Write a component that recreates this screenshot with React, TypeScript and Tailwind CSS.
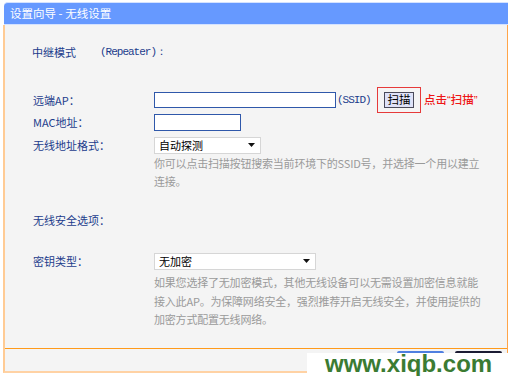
const cjk = "font-['Noto_Sans_CJK_SC',sans-serif]";
const mono = "font-['Liberation_Mono',monospace] text-[11px] tracking-[-1px]";
const label = 'w-[121px] shrink-0 text-[11px] leading-[18px] text-[#1c3c8c]';
const hint = 'ml-[121px] text-[11px] tracking-[-0.2px] text-[#9a9a9a]';
const quote = "font-['Liberation_Sans',sans-serif]";

function Select({ value, width }: { value: string; width: string }): React.JSX.Element {
  return (
    <div
      className={`${width} flex h-[17px] items-center justify-between border border-[#d6d6d6] bg-white pl-[4px] pr-[5px] text-[11px] text-black`}
    >
      <span className="leading-[15px]">{value}</span>
      <svg width="7" height="4" viewBox="0 0 7 4">
        <path d="M0 0h7L3.5 4z" fill="#111" />
      </svg>
    </div>
  );
}

export default function App(): React.JSX.Element {
  return (
    <div className={`relative h-[376px] w-[510px] overflow-hidden bg-white ${cjk}`}>
      <div className="pt-[2px]">
        {/* title bar */}
        <div className="ml-[4px] flex h-[23px] w-[504px] items-center rounded-tl-[4px] border-y border-[#d4e2ff] bg-[#6699ff] pl-[6px] text-[11.5px] text-white">
          设置向导 - 无线设置
        </div>

        <div className="ml-[3px] w-[505px] border-b-2 border-l-2 border-r border-b-[#ffd2a4] border-l-[#ffcb94] border-r-[#ffa448] bg-[#f4f4f4]">
          <div className="flex h-[324px] flex-col border-b border-[#ff9a1a] pl-[28px]">
            <div className="ml-[-1px] mt-[18px] flex h-[18px] items-center text-[11px] text-[#1c3c8c]">
              <span className="w-[68px]">中继模式</span>
              <span className={`${mono} text-[#1c3c8c]`}>(Repeater)：</span>
            </div>

            <div className="mt-[28px] flex h-[22px] items-center">
              <span className={label}>远端AP：</span>
              <div className="h-[16px] w-[182px] border border-[#2f58aa] bg-white" />
              <span className={`${mono} ml-[1px] w-[40px] text-[#1c3c8c]`}>(SSID)</span>
              <div className="flex h-[26px] w-[44px] items-center justify-center border border-[#e63a3a]">
                <button
                  type="button"
                  className="flex h-[16px] w-[30px] items-center justify-center border border-[#4a4a5a] bg-[#dfe2f8] text-[11.5px] leading-none text-black"
                >
                  扫描
                </button>
              </div>
              <span className="ml-[3px] text-[11.5px] font-medium text-[#ee1515]">
                点击<span className={quote}>“</span>扫描<span className={quote}>”</span>
              </span>
            </div>

            <div className="mt-[2px] flex h-[18px] items-center">
              <span className={label}>MAC地址：</span>
              <div className="h-[17px] w-[87px] border border-[#2f58aa] bg-white" />
            </div>

            <div className="mt-[5px] flex h-[18px] items-center">
              <span className={label}>无线地址格式：</span>
              <Select value="自动探测" width="w-[107px]" />
            </div>

            <p className={`${hint} leading-[18px]`}>
              你可以点击扫描按钮搜索当前环境下的SSID号，并选择一个用以建立
              <br />
              连接。
            </p>

            <div className="mt-[21px] flex h-[18px] items-center">
              <span className={label}>无线安全选项：</span>
            </div>

            <div className="mt-[23px] flex h-[18px] items-center">
              <span className={label}>密钥类型：</span>
              <Select value="无加密" width="w-[162px]" />
            </div>

            <p className={`${hint} mt-[3px] leading-[18.5px]`}>
              如果您选择了无加密模式，其他无线设备可以无需设置加密信息就能
              <br />
              接入此AP。为保障网络安全，强烈推荐开启无线安全，并使用提供的
              <br />
              加密方式配置无线网络。
            </p>
          </div>

          {/* footer buttons, mostly hidden by the watermark */}
          <div className="flex h-[22px] pt-[2px]">
            <div className="ml-[392px] h-[18px] w-[47px] rounded-[2px] bg-[#4f7fe0]" />
            <div className="ml-[11px] h-[18px] w-[47px] rounded-[2px] bg-[#1b1b33]" />
          </div>
        </div>
      </div>

      <div className="absolute left-[307px] top-[353px] flex h-[23px] w-[203px] items-start bg-white">
        <span className="ml-[18px] mt-[-3px] font-['Liberation_Sans',sans-serif] text-[24px] font-bold leading-[28px] text-[#3b7b32]">
          www.xiqb.com
        </span>
      </div>
    </div>
  );
}
